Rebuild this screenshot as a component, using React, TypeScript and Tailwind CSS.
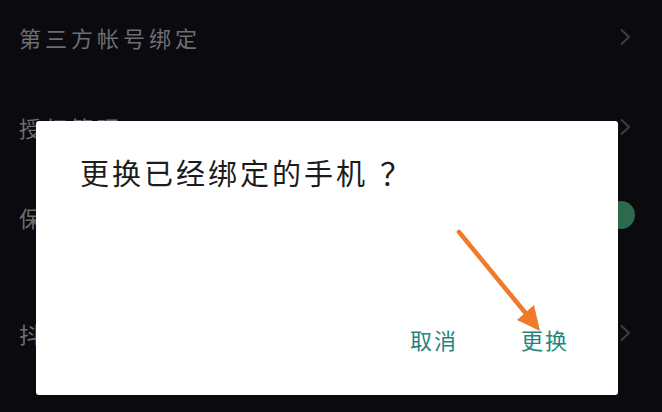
import React from 'react';

const rows = [
  { label: '第三方帐号绑定', kind: 'chevron', h: 'h-[90px]' },
  { label: '授权管理', kind: 'chevron', h: 'h-[90px]' },
  { label: '保存登录信息', kind: 'toggle', h: 'h-[90px]' },
  { label: '抖音号与手机号', kind: 'chevron', h: 'h-[90px] mt-[26px]' },
  { label: '账号注销', kind: 'chevron', h: 'h-[90px]' },
];

function Chevron() {
  return (
    <svg width="12" height="18" viewBox="0 0 12 18" className="mr-[31px]">
      <path d="M2 1.5 L10 9 L2 16.5" fill="none" stroke="#3d3d43" strokeWidth="2" />
    </svg>
  );
}

function SettingRow({ label, kind, h }: { label: string; kind: string; h: string }) {
  return (
    <div className={`flex items-center justify-between ${h}`}>
      <span className="pl-[19px] text-[22px] leading-none tracking-[4px] text-[#6e6e72]">{label}</span>
      {kind === 'toggle' ? (
        <div className="mr-[27px] -mt-1 h-[28px] w-[28px] rounded-full bg-[#2d6a4c]" />
      ) : (
        <Chevron />
      )}
    </div>
  );
}

export default function App() {
  return (
    <div
      className="relative h-[412px] w-[662px] overflow-hidden bg-[#0b0a0f]"
      style={{ fontFamily: '"Noto Sans CJK SC", "Noto Sans", sans-serif' }}
    >
      {/* Settings list behind the dialog */}
      <div className="-mt-[8px] flex flex-col">
        {rows.map((r) => (
          <SettingRow key={r.label} {...r} />
        ))}
      </div>

      {/* Dialog */}
      <div className="absolute left-[36px] top-[121px] flex h-[274px] w-[582px] flex-col justify-between rounded-[3px] bg-white">
        <h2 className="pl-[44px] pt-[35px] text-[29px] font-normal leading-none tracking-[3px] text-[#1c1c1c]">
          更换已经绑定的手机<span className="pl-[12px] text-[31px]">？</span>
        </h2>
        <div className="flex justify-end gap-[63px] pb-[45px] pr-[49px]">
          <button className="text-[22px] leading-none tracking-[2px] text-[#25847e]">取消</button>
          <button className="text-[22px] leading-none tracking-[2px] text-[#25847e]">更换</button>
        </div>
      </div>

      {/* Annotation arrow */}
      <svg className="pointer-events-none absolute inset-0" width="662" height="412" viewBox="0 0 662 412">
        <line x1="459" y1="232" x2="528" y2="316" stroke="#f07a2c" strokeWidth="4.5" strokeLinecap="round" />
        <polygon points="540,331 534,305 517,320" fill="#f07a2c" />
      </svg>
    </div>
  );
}
